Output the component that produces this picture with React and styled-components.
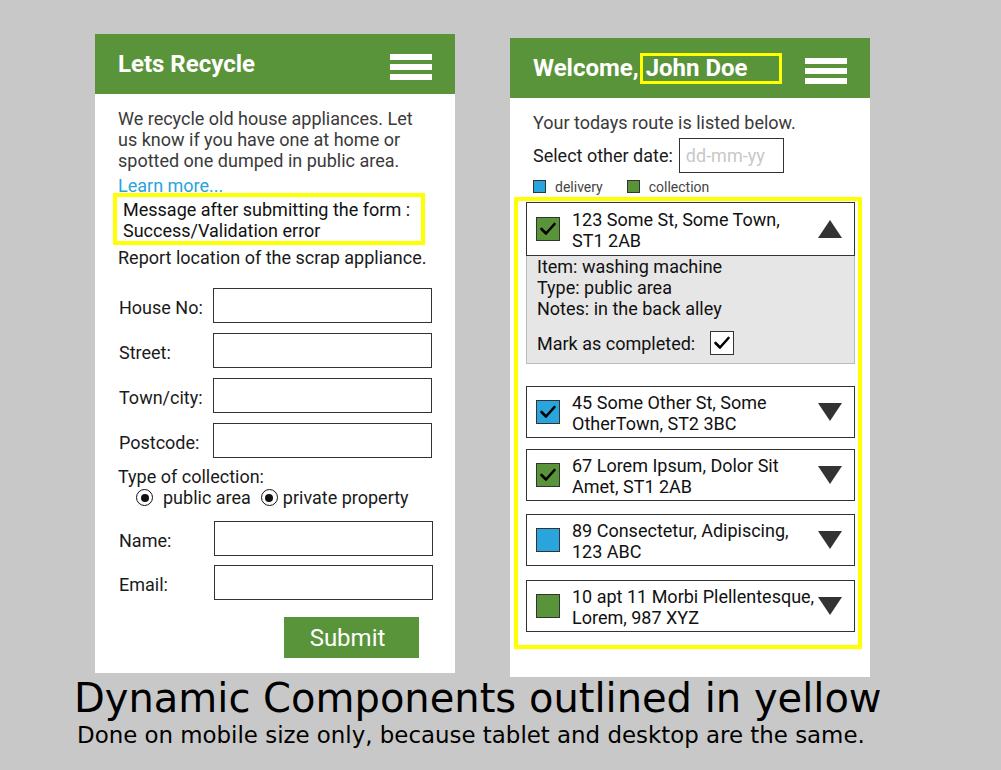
import React from "react";
import styled, { createGlobalStyle } from "styled-components";

const GREEN = "#5a943a";
const BLUE = "#29a4dd";
const YELLOW = "#ffff00";

const Global = createGlobalStyle`
  html, body { margin: 0; padding: 0; background: #c8c8c8; }
  body { font-family: Roboto, "Liberation Sans", sans-serif; }
  * { box-sizing: border-box; }
`;

const Page = styled.div`
  width: 1001px;
  height: 770px;
  background: #c8c8c8;
  overflow: hidden;
`;

const Panels = styled.div`
  display: flex;
  align-items: flex-start;
  gap: 55px;
  padding: 34px 0 0 95px;
`;

const Panel = styled.section`
  width: 360px;
  height: 639px;
  background: #fff;
  margin-top: ${(p) => p.$offset || 0}px;
  display: flex;
  flex-direction: column;
`;

const Header = styled.header`
  height: 60px;
  flex-shrink: 0;
  background: ${GREEN};
  display: flex;
  align-items: center;
  justify-content: space-between;
  padding: 0 23px;
`;

const Title = styled.h1`
  margin: 0;
  display: flex;
  align-items: center;
  font: 700 24px/1 Roboto, sans-serif;
  color: #fff;
`;

const NameBox = styled.span`
  display: flex;
  align-items: center;
  width: 142px;
  height: 31px;
  margin-left: 1px;
  padding-left: 3px;
  border: 3px solid ${YELLOW};
`;

const Burger = styled.div`
  width: 42px;
  display: flex;
  flex-direction: column;
  gap: 4px;
  margin-top: 6px;
  span {
    display: block;
    height: 6px;
    background: #fff;
  }
`;

const LeftBody = styled.div`
  padding: 14px 23px 0;
  display: flex;
  flex-direction: column;
  align-items: flex-start;
`;

const Intro = styled.p`
  margin: 0;
  font-size: 18px;
  line-height: 21px;
  color: #3a3a3a;
`;

const MoreLink = styled.a`
  display: block;
  margin-top: 5px;
  font-size: 18px;
  line-height: 20px;
  color: ${BLUE};
  text-decoration: none;
`;

const Notice = styled.div`
  position: relative;
  margin: -3px 0 0 -5px;
  width: 312px;
  border: 4px solid ${YELLOW};
  background: #fff;
  padding: 2px 6px 0;
  font-size: 18px;
  line-height: 21px;
  color: #111;
`;

const Plain = styled.p`
  margin: ${(p) => p.$mt || 0}px 0 0;
  font-size: 18px;
  line-height: 21px;
  color: #1a1a1a;
`;

const FormGrid = styled.div`
  margin-top: ${(p) => p.$mt}px;
  display: grid;
  grid-template-columns: ${(p) => p.$labelW}px 219px;
  row-gap: ${(p) => p.$gap}px;
  align-items: center;
`;

const FieldLabel = styled.label`
  font-size: 18px;
  line-height: 21px;
  color: #1a1a1a;
  padding: 3px 0 0 1px;
`;

const TextBox = styled.input`
  width: ${(p) => p.$w || 219}px;
  height: 35px;
  border: 1px solid #333;
  border-radius: 0;
  background: #fff;
  padding: 0 6px;
  font: 18px Roboto, sans-serif;
  outline: none;
  &::placeholder {
    color: #c8c8c8;
  }
`;

const RadioRow = styled.div`
  display: flex;
  align-items: center;
  padding-left: 18px;
  font-size: 18px;
  line-height: 21px;
  color: #1a1a1a;
`;

const RadioOption = styled.span`
  display: flex;
  align-items: center;
  gap: ${(p) => p.$gap}px;
  margin-right: 10px;
`;

const RadioDot = styled.span`
  width: 17px;
  height: 17px;
  border-radius: 50%;
  border: 1.5px solid #111;
  display: flex;
  align-items: center;
  justify-content: center;
  &::after {
    content: "";
    width: 8px;
    height: 8px;
    border-radius: 50%;
    background: #111;
  }
`;

const SubmitButton = styled.button`
  align-self: flex-end;
  margin: 17px 13px 0 0;
  width: 135px;
  height: 41px;
  border: none;
  background: ${GREEN};
  color: #fff;
  font: 400 24px Roboto, sans-serif;
  padding: 0 8px 0 0;
`;

const RightBody = styled.div`
  padding: 14px 8px 0 4px;
  display: flex;
  flex-direction: column;
`;

const Indented = styled.div`
  padding-left: 19px;
`;

const DateRow = styled.div`
  display: flex;
  align-items: center;
  gap: 6px;
  margin-top: 5px;
  font-size: 18px;
  color: #1a1a1a;
`;

const Legend = styled.div`
  display: flex;
  align-items: center;
  gap: 24px;
  margin-top: 7px;
  height: 13px;
  font-size: 14px;
  color: #444;
`;

const LegendItem = styled.span`
  display: flex;
  align-items: center;
  gap: 9px;
`;

const Swatch = styled.span`
  width: 13px;
  height: 13px;
  background: ${(p) => p.$color};
  border: 1px solid #333;
`;

const RouteList = styled.div`
  margin-top: 4px;
  height: 452px;
  border: 4px solid ${YELLOW};
  padding: 1px 3px 0 8px;
  display: flex;
  flex-direction: column;
`;

const Stop = styled.div`
  margin-top: ${(p) => p.$mt}px;
`;

const StopHeader = styled.div`
  height: ${(p) => p.$h}px;
  border: 1px solid #333;
  display: flex;
  align-items: center;
  padding: 0 12px 0 9px;
  gap: 12px;
  svg {
    flex-shrink: 0;
  }
`;

const Box = styled.span`
  flex-shrink: 0;
  width: 24px;
  height: 24px;
  border: 1px solid #333;
  background: ${(p) => p.$color};
  display: flex;
  align-items: center;
  justify-content: center;
`;

const StopText = styled.div`
  flex: 1;
  min-width: 0;
  font-size: 18px;
  line-height: 21px;
  color: #111;
  margin-top: 2px;
  margin-right: -10px;
  white-space: nowrap;
`;

const Details = styled.div`
  height: 108px;
  background: #e6e6e6;
  border: 1px solid #bbb;
  border-top: none;
  padding: 0 10px;
  font-size: 18px;
  line-height: 21px;
  color: #111;
`;

const MarkRow = styled.div`
  display: flex;
  align-items: center;
  gap: 15px;
  margin-top: 12px;
`;

const Caption = styled.div`
  padding-left: 74px;
  margin-top: 1px;
  font-family: "DejaVu Sans", sans-serif;
  color: #000;
`;

const CaptionTitle = styled.div`
  font-size: 40px;
  line-height: 40px;
`;

const CaptionSub = styled.div`
  margin-top: 4px;
  padding-left: 3px;
  font-size: 22.9px;
  line-height: 26px;
`;

const Check = () => (
  <svg width="18" height="18" viewBox="0 0 18 18">
    <polyline points="2.5,9 7,13.5 15.5,4" fill="none" stroke="#000" strokeWidth="2.6" strokeLinecap="round" strokeLinejoin="round" />
  </svg>
);

const Arrow = ({ up }) => (
  <svg width="24" height="18" viewBox="0 0 24 18">
    <polygon points={up ? "12,0 24,18 0,18" : "0,0 24,0 12,18"} fill="#333" />
  </svg>
);

const Hamburger = () => (
  <Burger>
    <span />
    <span />
    <span />
  </Burger>
);

const stops = [
  { lines: ["123 Some St, Some Town,", "ST1 2AB"], color: GREEN, checked: true, open: true, mt: 0, h: 54 },
  { lines: ["45 Some Other St, Some", "OtherTown, ST2 3BC"], color: BLUE, checked: true, mt: 22, h: 52 },
  { lines: ["67 Lorem Ipsum, Dolor Sit", "Amet, ST1 2AB"], color: GREEN, checked: true, mt: 11, h: 52 },
  { lines: ["89 Consectetur, Adipiscing,", "123 ABC"], color: BLUE, mt: 13, h: 52 },
  { lines: ["10 apt 11 Morbi Plellentesque,", "Lorem, 987 XYZ"], color: GREEN, mt: 14, h: 52 },
];

export default function App() {
  return (
    <Page>
      <Global />
      <Panels>
        <Panel>
          <Header>
            <Title>Lets Recycle</Title>
            <Hamburger />
          </Header>
          <LeftBody>
            <Intro>
              We recycle old house appliances. Let
              <br />
              us know if you have one at home or
              <br />
              spotted one dumped in public area.
            </Intro>
            <MoreLink href="#">Learn more...</MoreLink>
            <Notice>
              Message after submitting the form :
              <br />
              Success/Validation error
            </Notice>
            <Plain $mt={2}>Report location of the scrap appliance.</Plain>
            <FormGrid $mt={20} $labelW={95} $gap={10}>
              <FieldLabel>House No:</FieldLabel>
              <TextBox />
              <FieldLabel>Street:</FieldLabel>
              <TextBox />
              <FieldLabel>Town/city:</FieldLabel>
              <TextBox />
              <FieldLabel>Postcode:</FieldLabel>
              <TextBox />
            </FormGrid>
            <Plain $mt={8}>Type of collection:</Plain>
            <RadioRow>
              <RadioOption $gap={10}>
                <RadioDot />
                public area
              </RadioOption>
              <RadioOption $gap={5}>
                <RadioDot />
                private property
              </RadioOption>
            </RadioRow>
            <FormGrid $mt={13} $labelW={96} $gap={9}>
              <FieldLabel>Name:</FieldLabel>
              <TextBox />
              <FieldLabel>Email:</FieldLabel>
              <TextBox />
            </FormGrid>
            <SubmitButton>Submit</SubmitButton>
          </LeftBody>
        </Panel>

        <Panel $offset={4}>
          <Header>
            <Title>
              Welcome,
              <NameBox>John Doe</NameBox>
            </Title>
            <Hamburger />
          </Header>
          <RightBody>
            <Indented>
              <Intro>Your todays route is listed below.</Intro>
              <DateRow>
                Select other date:
                <TextBox $w={105} placeholder="dd-mm-yy" />
              </DateRow>
              <Legend>
                <LegendItem>
                  <Swatch $color={BLUE} />
                  delivery
                </LegendItem>
                <LegendItem>
                  <Swatch $color={GREEN} />
                  collection
                </LegendItem>
              </Legend>
            </Indented>
            <RouteList>
              {stops.map((s, i) => (
                <Stop key={i} $mt={s.mt}>
                  <StopHeader $h={s.h}>
                    <Box $color={s.color}>{s.checked && <Check />}</Box>
                    <StopText>
                      {s.lines[0]}
                      <br />
                      {s.lines[1]}
                    </StopText>
                    <Arrow up={s.open} />
                  </StopHeader>
                  {s.open && (
                    <Details>
                      Item: washing machine
                      <br />
                      Type: public area
                      <br />
                      Notes: in the back alley
                      <MarkRow>
                        Mark as completed:
                        <Box $color="#fff">
                          <Check />
                        </Box>
                      </MarkRow>
                    </Details>
                  )}
                </Stop>
              ))}
            </RouteList>
          </RightBody>
        </Panel>
      </Panels>
      <Caption>
        <CaptionTitle>Dynamic Components outlined in yellow</CaptionTitle>
        <CaptionSub>Done on mobile size only, because tablet and desktop are the same.</CaptionSub>
      </Caption>
    </Page>
  );
}
